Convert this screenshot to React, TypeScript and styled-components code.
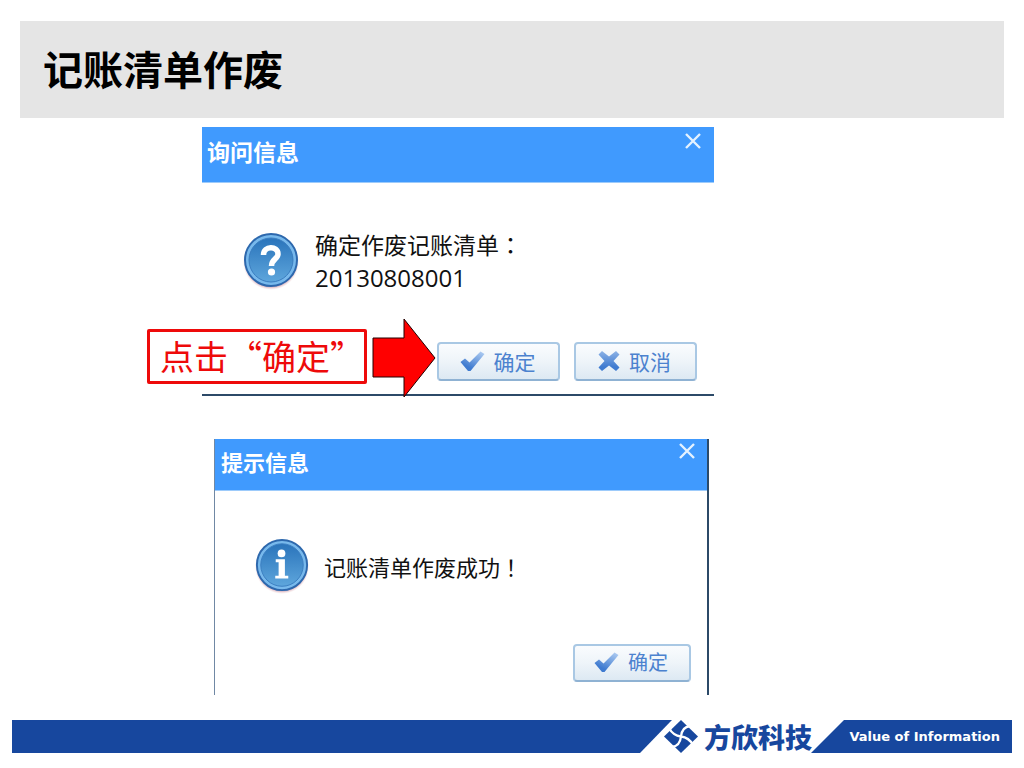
import React, { useId } from "react";
import styled, { createGlobalStyle } from "styled-components";

const sans = `"Open Sans", "Noto Sans CJK SC", sans-serif`;
const cjk = `"Noto Sans CJK SC", sans-serif`;

const GlobalStyle = createGlobalStyle`
  * { box-sizing: border-box; }
  body { margin: 0; background: #fff; font-family: ${cjk}; color: #000; }
  h1, h2, p { margin: 0; }
`;

const Slide = styled.div`
  min-height: 100vh;
  padding: 21px 0 15px;
  display: flex;
  flex-direction: column;
`;

const TitleBar = styled.header`
  margin: 0 20px;
  padding: 17px 23px 20px;
  background: #e5e5e5;
`;

const SlideTitle = styled.h1`
  font: 700 40px/60px ${cjk};
`;

const Stage = styled.main`
  flex: 1;
  padding: 9px 108px 24px 0;
`;

const DialogColumn = styled.div`
  display: flex;
  flex-direction: column;
  gap: 43px;
  max-width: 512px;
  margin: 0 auto;
`;

const Dialog = styled.section<{ $framed?: boolean }>`
  margin: ${(p) => (p.$framed ? "0 5px 0 12px" : "0")};
  border: 0 solid #2c4a68;
  border-width: ${(p) => (p.$framed ? "0 2px 0 1px" : "0 0 2px")};
  border-left-color: #7088a4;
`;

const DialogHeader = styled.div<{ $compact?: boolean }>`
  display: flex;
  justify-content: space-between;
  align-items: flex-start;
  height: ${(p) => (p.$compact ? 52 : 56)}px;
  padding: ${(p) => (p.$compact ? "4px 12px 0 6px" : "6px 13px 0 5px")};
  background: #409afe;
  border-bottom: 1px solid #9dcbfb;
`;

const DialogTitle = styled.h2<{ $compact?: boolean }>`
  font: 700 ${(p) => (p.$compact ? 22 : 23)}px/36px ${cjk};
  color: #fff;
`;

const CloseButton = styled.button`
  display: flex;
  padding: 0;
  border: 0;
  background: none;
  color: #e4f2ff;
`;

const Message = styled.div<{ $compact?: boolean }>`
  display: flex;
  align-items: center;
  gap: ${(p) => (p.$compact ? 14 : 15)}px;
  padding: ${(p) => (p.$compact ? "47px 39px 0" : "45px 40px 0")};
`;

const MessageText = styled.p<{ $compact?: boolean }>`
  font: 400 ${(p) => (p.$compact ? 22 : 23)}px/33px ${cjk};
  color: #111;
`;

/* Traditional-style punctuation sits in the middle of its cell. */
const CenteredMark = styled.span`
  font-family: "Noto Sans CJK TC", sans-serif;
`;

const Code = styled.span`
  display: block;
  font: 400 24px/33px ${sans};
`;

const Actions = styled.div<{ $compact?: boolean }>`
  display: flex;
  justify-content: flex-end;
  gap: 14px;
  padding: ${(p) => (p.$compact ? "50px 16px 13px" : "48px 17px 13px")};
`;

const Anchor = styled.div`
  position: relative;
`;

const ActionButton = styled.button<{ $compact?: boolean }>`
  display: flex;
  align-items: center;
  justify-content: center;
  gap: 9px;
  width: ${(p) => (p.$compact ? 118 : 123)}px;
  height: ${(p) => (p.$compact ? 38 : 39)}px;
  padding: 0 2px 2px 0;
  border: 2px solid #a9c8e4;
  border-bottom-color: #8fb2d3;
  border-radius: 4px;
  background: linear-gradient(#fafcfe, #eef4f9 50%, #dde9f3);
  color: #4c82cf;
  font: 400 ${(p) => (p.$compact ? 20 : 21)}px/30px ${cjk};
`;

const Callout = styled.div`
  position: absolute;
  right: 100%;
  bottom: -17px;
  display: flex;
  align-items: center;
  gap: 5px;
  margin-right: 1px;
`;

const CalloutBox = styled.p`
  width: 220px;
  margin-bottom: 3px;
  padding: 4px 0 5px 10px;
  border: 3px solid #ee0a0a;
  border-radius: 2px;
  background: #fff;
  color: #ee0a0a;
  font: 400 34px/40px ${cjk};
  white-space: nowrap;
`;

const Drawing = styled.svg`
  display: block;
  flex: none;
`;

const Footer = styled.footer`
  display: flex;
  height: 33px;
  margin: 0 12px;
`;

const FooterBar = styled.div`
  flex: 1;
  background: #17479e;
  clip-path: polygon(0 0, 100% 0, calc(100% - 32px) 100%, 0 100%);
`;

const Brand = styled.div`
  display: flex;
  align-items: center;
  gap: 6px;
  margin: 0 -1px 0 -8px;
  color: #17479e;
  font: 900 27px/33px ${cjk};
`;

const Slogan = styled.div`
  width: 201px;
  padding-right: 12px;
  background: #17479e;
  clip-path: polygon(33px 0, 100% 0, 100% 100%, 0 100%);
  color: #fff;
  font: 700 13px/34px "DejaVu Sans", sans-serif;
  text-align: right;
  white-space: nowrap;
`;

function BadgeIcon({ kind, size }: { kind: "question" | "info"; size: number }) {
  const id = useId();
  return (
    <Drawing width={size} height={size} viewBox="0 0 58 58" aria-hidden="true">
      <defs>
        <linearGradient id={id + "f"} x1="0" y1="0" x2="0" y2="1">
          <stop offset="0" stopColor="#2a74bb" />
          <stop offset="1" stopColor="#5ea6dc" />
        </linearGradient>
        <radialGradient id={id + "s"}>
          <stop offset="0.85" stopColor="#b0708a" stopOpacity="0.9" />
          <stop offset="1" stopColor="#f0c8c8" stopOpacity="0" />
        </radialGradient>
      </defs>
      <circle cx="29" cy="30" r="28" fill={`url(#${id}s)`} />
      <circle cx="29" cy="28" r="26" fill="#78b9ec" stroke="#2d68ad" strokeWidth="2" />
      <circle cx="29" cy="28" r="22" fill={`url(#${id}f)`} stroke="#3a7dc0" strokeWidth="1" />
      {kind === "question" ? (
        <>
          <path d="M21.5 23C21.5 13.5 36 13.5 36 22C36 27 29.5 27 29.5 34" fill="none" stroke="#fff" strokeWidth="5.5" />
          <circle cx="29.5" cy="40" r="3.6" fill="#fff" />
        </>
      ) : (
        <>
          <circle cx="28.5" cy="16" r="4" fill="#fff" />
          <path d="M22.5 22H32V39H35.5V42H22V39H25.5V25H22.5Z" fill="#fff" />
        </>
      )}
    </Drawing>
  );
}

function CheckIcon() {
  const id = useId();
  return (
    <Drawing width="25" height="22" viewBox="0 0 25 22" aria-hidden="true">
      <linearGradient id={id} x1="0.2" y1="1" x2="0.8" y2="0">
        <stop offset="0.2" stopColor="#3f7bd0" />
        <stop offset="1" stopColor="#a9c8f0" />
      </linearGradient>
      <path d="M0.5 12L5 8.5L9.5 12.5L20.5 1.5L24.5 4L10.500 21H8Z" fill={`url(#${id})`} />
    </Drawing>
  );
}

function CrossIcon() {
  const id = useId();
  return (
    <Drawing width="22" height="22" viewBox="0 0 22 22" aria-hidden="true">
      <linearGradient id={id} x1="0" y1="0" x2="0" y2="1">
        <stop offset="0" stopColor="#8db3e6" />
        <stop offset="0.8" stopColor="#3f7bd0" />
      </linearGradient>
      <path d="M0.5 4.5L4 1L11 6.5L18 1L21.5 4.5L15.5 11L21.5 17.5L18 21L11 15.5L4 21L0.5 17.5L6.5 11Z" fill={`url(#${id})`} />
    </Drawing>
  );
}

function CloseIcon() {
  return (
    <Drawing width="16" height="16" viewBox="0 0 16 16" fill="none" stroke="currentColor" strokeWidth="2.4" aria-hidden="true">
      <path d="M1 1L15 15M15 1L1 15" />
    </Drawing>
  );
}

function ArrowShape() {
  return (
    <Drawing width="64" height="80" viewBox="0 0 64 80" aria-hidden="true">
      <path d="M1 20H32V1L63 40L32 79V59H1Z" fill="#f00" stroke="#200" />
    </Drawing>
  );
}

function BrandMark() {
  return (
    <Drawing width="34" height="33" viewBox="0 0 34 33" aria-hidden="true">
      <path d="M17 0L34 16.5L17 33L0 16.5Z" fill="#17479e" />
      <path
        d="M26 6Q18 7 17 16.5Q16 26 8 27M5 8Q9 15.5 17 16.5Q25 17.5 29 25"
        fill="none"
        stroke="#fff"
        strokeWidth="2.3"
      />
    </Drawing>
  );
}

export default function App() {
  return (
    <>
      <GlobalStyle />
      <Slide>
        <TitleBar>
          <SlideTitle>记账清单作废</SlideTitle>
        </TitleBar>
        <Stage>
          <DialogColumn>
            <Dialog aria-labelledby="ask-title">
              <DialogHeader>
                <DialogTitle id="ask-title">询问信息</DialogTitle>
                <CloseButton type="button" aria-label="关闭"><CloseIcon /></CloseButton>
              </DialogHeader>
              <Message>
                <BadgeIcon kind="question" size={58} />
                <MessageText>
                  确定作废记账清单<CenteredMark>：</CenteredMark>
                  <Code>20130808001</Code>
                </MessageText>
              </Message>
              <Actions>
                <Anchor>
                  <ActionButton type="button"><CheckIcon />确定</ActionButton>
                  <Callout>
                    <CalloutBox>点击“确定”</CalloutBox>
                    <ArrowShape />
                  </Callout>
                </Anchor>
                <ActionButton type="button"><CrossIcon />取消</ActionButton>
              </Actions>
            </Dialog>
            <Dialog $framed aria-labelledby="tip-title">
              <DialogHeader $compact>
                <DialogTitle $compact id="tip-title">提示信息</DialogTitle>
                <CloseButton type="button" aria-label="关闭"><CloseIcon /></CloseButton>
              </DialogHeader>
              <Message $compact>
                <BadgeIcon kind="info" size={56} />
                <MessageText $compact>
                  记账清单作废成功<CenteredMark>！</CenteredMark>
                </MessageText>
              </Message>
              <Actions $compact>
                <ActionButton $compact type="button"><CheckIcon />确定</ActionButton>
              </Actions>
            </Dialog>
          </DialogColumn>
        </Stage>
        <Footer>
          <FooterBar />
          <Brand><BrandMark />方欣科技</Brand>
          <Slogan>Value of Information</Slogan>
        </Footer>
      </Slide>
    </>
  );
}
